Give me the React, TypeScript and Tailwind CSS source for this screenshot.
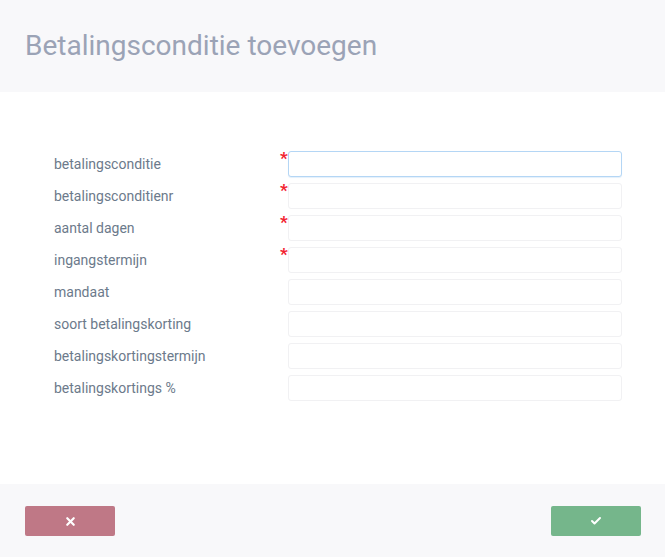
import { Check, X } from "lucide-react";

const fields = [
  { label: "betalingsconditie", required: true, focused: true },
  { label: "betalingsconditienr", required: true },
  { label: "aantal dagen", required: true },
  { label: "ingangstermijn", required: true },
  { label: "mandaat" },
  { label: "soort betalingskorting" },
  { label: "betalingskortingstermijn" },
  { label: "betalingskortings %" },
];

export default function App() {
  return (
    <div className="flex h-[557px] w-[665px] flex-col bg-white font-['Roboto',sans-serif]">
      <header className="flex h-[92px] shrink-0 items-center bg-[#f8f8fa] px-[25px]">
        <h1 className="text-[28px] font-normal text-[#9ba3b6]">Betalingsconditie toevoegen</h1>
      </header>

      <main className="flex-1 pt-[59px]">
        <div className="flex flex-col gap-[6px] pl-[54px] pr-[43px]">
          {fields.map((f) => (
            <div key={f.label} className="flex h-[26px] items-center">
              <label className="w-[226px] pt-[1px] text-[14px] text-[#6c7a8b]">{f.label}</label>
              <span className="relative h-full w-[8px]">
                {f.required && (
                  <span className="absolute left-[0px] top-[-1px] text-[17px] font-bold leading-none text-[#f2222e]">*</span>
                )}
              </span>
              <input
                className={`h-full flex-1 rounded-[3px] border bg-white px-2 text-[13px] outline-none ${
                  f.focused ? "border-[#b4d6f5] shadow-[0_1px_1px_#e4f0fb]" : "border-[#f1f1f3]"
                }`}
              />
            </div>
          ))}
        </div>
      </main>

      <footer className="flex h-[73px] shrink-0 items-start justify-between bg-[#f8f8fa] px-[25px] pt-[22px]">
        <button className="flex h-[30px] w-[90px] items-center justify-center rounded-[2px] bg-[#bf7886] text-white">
          <X size={13} strokeWidth={4} />
        </button>
        <button className="mr-[-1px] flex h-[30px] w-[90px] items-center justify-center rounded-[2px] bg-[#75b68b] text-white">
          <Check size={12} strokeWidth={4} />
        </button>
      </footer>
    </div>
  );
}
